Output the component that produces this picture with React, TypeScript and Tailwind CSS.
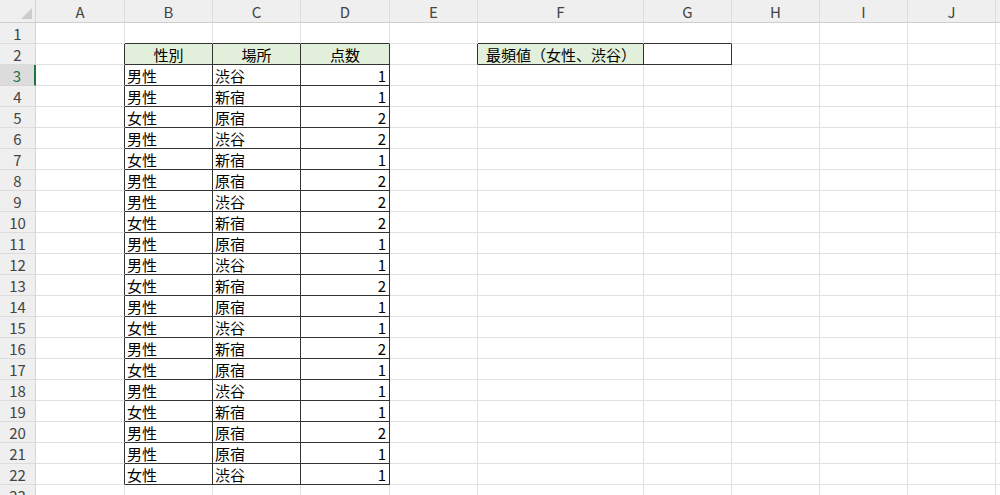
import React from 'react';

const COLS = [
  { label: 'A', w: 'w-[89px]' },
  { label: 'B', w: 'w-[88px]' },
  { label: 'C', w: 'w-[88px]' },
  { label: 'D', w: 'w-[89px]' },
  { label: 'E', w: 'w-[88px]' },
  { label: 'F', w: 'w-[166px]' },
  { label: 'G', w: 'w-[88px]' },
  { label: 'H', w: 'w-[88px]' },
  { label: 'I', w: 'w-[88px]' },
  { label: 'J', w: 'w-[88px]' },
  { label: '', w: 'w-[60px]' },
];

const DATA: [string, string, number][] = [
  ['男性', '渋谷', 1],
  ['男性', '新宿', 1],
  ['女性', '原宿', 2],
  ['男性', '渋谷', 2],
  ['女性', '新宿', 1],
  ['男性', '原宿', 2],
  ['男性', '渋谷', 2],
  ['女性', '新宿', 2],
  ['男性', '原宿', 1],
  ['男性', '渋谷', 1],
  ['女性', '新宿', 2],
  ['男性', '原宿', 1],
  ['女性', '渋谷', 1],
  ['男性', '新宿', 2],
  ['女性', '原宿', 1],
  ['男性', '渋谷', 1],
  ['女性', '新宿', 1],
  ['男性', '原宿', 2],
  ['男性', '原宿', 1],
  ['女性', '渋谷', 1],
];

type Cell = { text?: string; align?: 'left' | 'center' | 'right' | 'indent'; fill?: boolean };

// col index: 0 = A, 1 = B ...
function cellAt(row: number, col: number): Cell {
  if (row === 2) {
    if (col === 1) return { text: '性別', align: 'center', fill: true };
    if (col === 2) return { text: '場所', align: 'center', fill: true };
    if (col === 3) return { text: '点数', align: 'center', fill: true };
    if (col === 5) return { text: '最頻値（女性、渋谷）', align: 'indent', fill: true };
    if (col === 6) return {};
  }
  if (row >= 3 && row <= 22) {
    const d = DATA[row - 3];
    if (col === 1) return { text: d[0] };
    if (col === 2) return { text: d[1] };
    if (col === 3) return { text: String(d[2]), align: 'right' };
  }
  return {};
}

function inTable(row: number, col: number) {
  if (row >= 2 && row <= 22 && col >= 1 && col <= 3) return true;
  if (row === 2 && (col === 5 || col === 6)) return true;
  return false;
}

function blackRight(row: number, col: number) {
  return inTable(row, col) || inTable(row, col + 1);
}

function blackBottom(row: number, col: number) {
  return inTable(row, col) || inTable(row + 1, col);
}

export default function App() {
  const rows = Array.from({ length: 23 }, (_, i) => i + 1);
  return (
    <div
      className="w-[1000px] h-[495px] overflow-hidden bg-white text-[15px] text-black"
      style={{ fontFamily: '"Noto Sans CJK JP", "Noto Sans", sans-serif' }}
    >
      {/* column header */}
      <div className="flex h-[23px] bg-[#efefef] border-b border-[#cfcfcf]">
        <div className="w-[36px] shrink-0 border-r border-[#d6d6d6] relative">
          <svg className="absolute right-[3px] bottom-[3px]" width="11" height="11" viewBox="0 0 11 11">
            <polygon points="11,0 11,11 0,11" fill="#cdcdcd" />
          </svg>
        </div>
        {COLS.map((c, i) => (
          <div
            key={i}
            className={`${c.w} shrink-0 border-r border-[#dcdcdc] flex items-center justify-center text-[#444] text-[15px] leading-none`}
          >
            {c.label}
          </div>
        ))}
      </div>

      {rows.map((r) => (
        <div key={r} className="flex h-[21px]">
          {r === 3 ? (
            <div className="w-[36px] shrink-0 bg-[#dcdcdc] border-r-2 border-[#217346] border-b border-b-[#d6d6d6] flex items-center justify-center text-[#217346] leading-none">
              {r}
            </div>
          ) : (
            <div className="w-[36px] shrink-0 bg-[#efefef] border-r border-[#d6d6d6] border-b border-b-[#dcdcdc] flex items-center justify-center text-[#444] leading-none">
              {r}
            </div>
          )}
          {COLS.map((c, ci) => {
            const cell = cellAt(r, ci);
            const right = blackRight(r, ci) ? 'border-r-[#333]' : 'border-r-[#e1e1e1]';
            const bottom = blackBottom(r, ci) ? 'border-b-[#333]' : 'border-b-[#e1e1e1]';
            const fill = cell.fill ? 'bg-[#e2efda]' : '';
            const align =
              cell.align === 'center'
                ? 'justify-center'
                : cell.align === 'right'
                  ? 'justify-end pr-[3px]'
                  : cell.align === 'indent'
                    ? 'justify-start pl-[8px]'
                    : 'justify-start pl-[2px]';
            return (
              <div
                key={ci}
                className={`${c.w} shrink-0 border-r border-b ${right} ${bottom} ${fill} flex items-center ${align} whitespace-nowrap leading-none pt-[1px]`}
              >
                {cell.text}
              </div>
            );
          })}
        </div>
      ))}
    </div>
  );
}
